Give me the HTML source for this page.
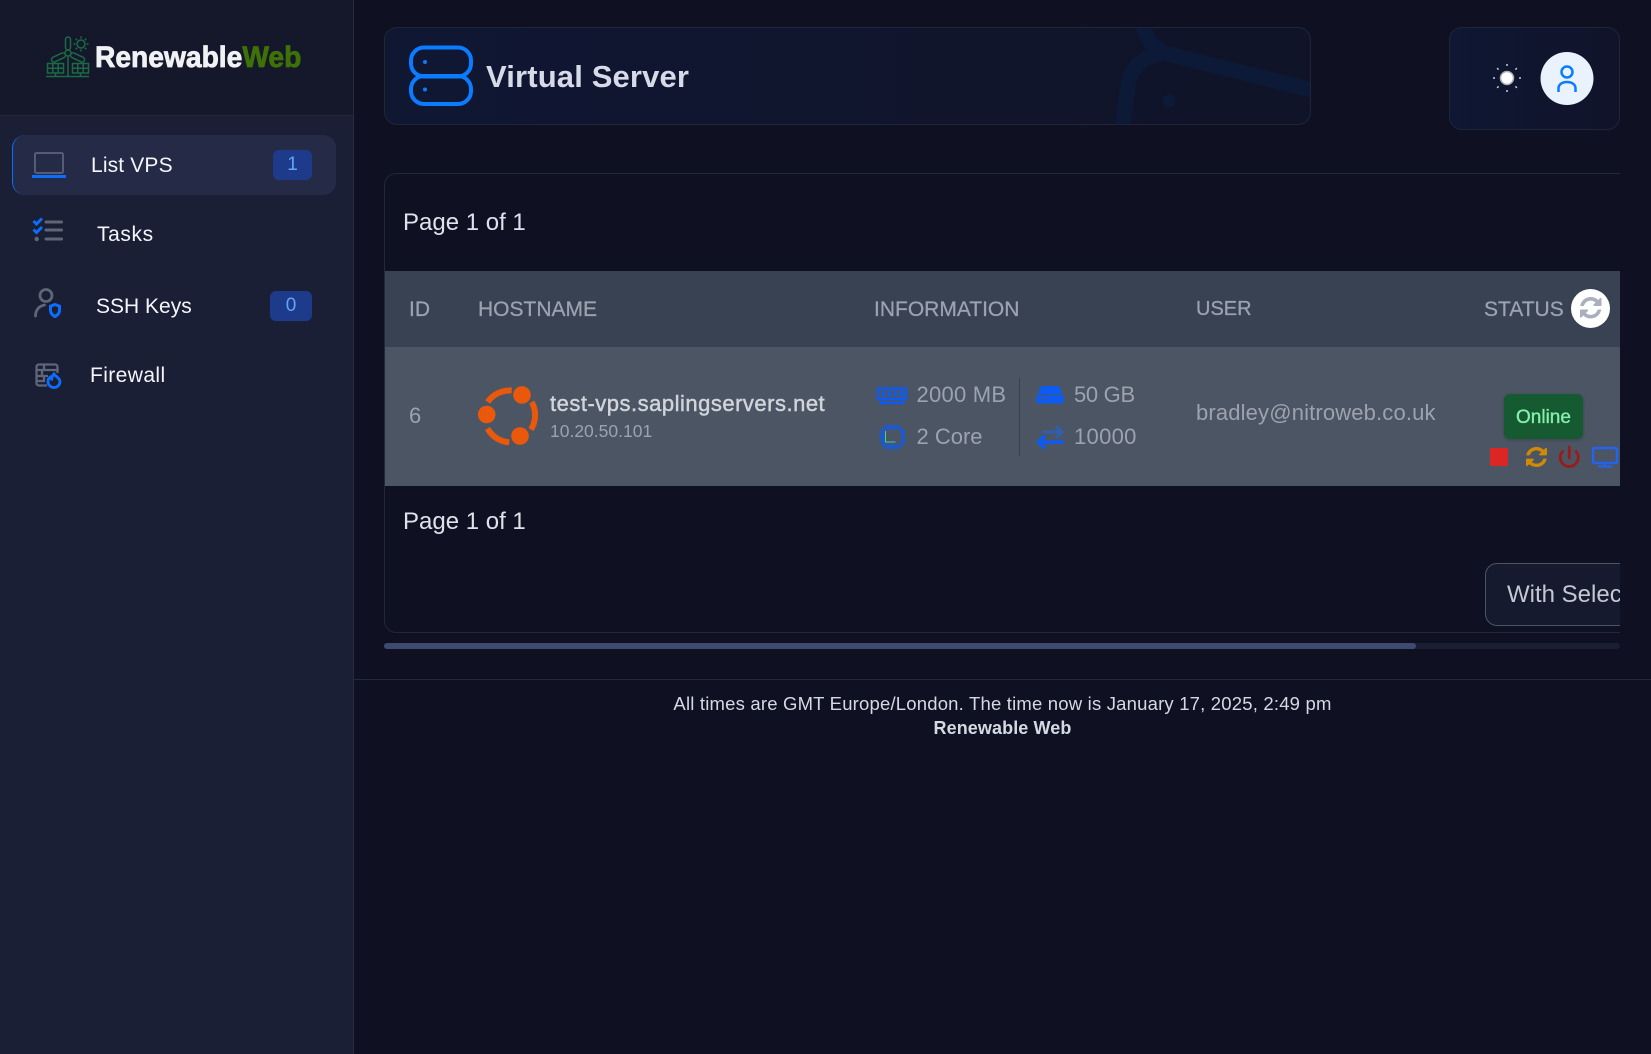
<!DOCTYPE html>
<html lang="en"><head><meta charset="utf-8"><title>Virtual Server</title>
<style>
*{box-sizing:border-box}
html,body{margin:0;padding:0;width:1651px;height:1054px;overflow:hidden;background:#0f1123;font-family:"Liberation Sans",sans-serif}
.t{position:absolute;white-space:nowrap;line-height:1}
.a{position:absolute}
svg{position:absolute;overflow:visible}
.side{left:0;top:0;width:354px;height:1054px;background:#1a1f35;border-right:1px solid #262b40}
.logo{left:0;top:0;width:353px;height:116px;background:#15172b;border-bottom:1px solid #23283c}
.active{left:12px;top:135px;width:324px;height:60px;background:#252b47;border-radius:13px;border-left:1px solid #0d6efd}
.badge{background:#1e3a8a;color:#60a5fa;border-radius:6px;font-size:19px;line-height:30px;text-align:center;height:30px}
.nav{color:#f4f6fb;font-size:21px}
.hd{left:384px;top:27px;width:927px;height:98px;border:1px solid #1e2638;border-radius:13px;background:linear-gradient(90deg,#101733,#101428);overflow:hidden}
.rt{left:1449px;top:27px;width:171px;height:103px;border:1px solid #1e2638;border-radius:13px;background:linear-gradient(90deg,#0f1733,#10132a)}
.wrap{left:384px;top:173px;width:1236px;height:460px;border:1px solid #222838;border-right:0;border-radius:12px 0 0 12px;overflow:hidden}
.th{left:0;top:97px;width:1236px;height:76px;background:#394253}
.tr{left:0;top:173px;width:1236px;height:139px;background:#4b5563}
.thx{color:#9ca3af;font-size:21px;top:124.500px;-webkit-text-stroke:.25px currentColor}
.pg{color:#dfe2ea;font-size:24px}
.g{color:#9ca3af;font-size:22px}
</style></head><body>

<div class="a side">
  <div class="a logo"></div>
  <svg style="left:0;top:0" width="354" height="116" fill="none" stroke="#1a6b44" stroke-width="1.500">
    <rect x="65.500" y="37" width="5" height="13" rx="2.500"/>
    <circle cx="68" cy="53" r="3"/>
    <rect x="-2.500" y="3" width="5" height="15" rx="2.500" transform="translate(68 53) rotate(65)"/>
    <rect x="-2.500" y="3" width="5" height="15" rx="2.500" transform="translate(68 53) rotate(-65)"/>
    <path d="M68 56V76M46 76.500H89"/>
    <path d="M47.500 63.500H63.500V73H47.500ZM52.800 63.500V73M58.200 63.500V73M47.500 68.200H63.500M55.500 73V76M72.500 63.500H88.500V73H72.500ZM77.800 63.500V73M83.200 63.500V73M72.500 68.200H88.500M80.500 73V76"/>
    <circle cx="81" cy="44" r="4"/>
    <path d="M81 36.500v2M81 49.500v2M73.500 44h2M86.500 44h2M75.700 38.700l1.400 1.400M84.900 47.900l1.400 1.400M86.300 38.700l-1.400 1.400M77.100 47.900l-1.400 1.400"/>
  </svg>
  <div class="t" style="left:95px;top:43px;font-size:30px;font-weight:700;color:#f1f2f4;transform:scaleX(.94);transform-origin:0 0;-webkit-text-stroke:.8px currentColor">Renewable<span style="color:#3f7206">Web</span></div>

  <div class="a active"></div>
  <svg style="left:0;top:0" width="354" height="420" fill="none">
    <rect x="35" y="153" width="28" height="20" rx="1.500" stroke="#545c7a" stroke-width="2"/>
    <path d="M32 176.500H66" stroke="#0d6efd" stroke-width="3"/>
    <path d="M33.500 221l3 3 5.500-5.500M33.500 229.500l3 3 5.500-5.500" stroke="#0d6efd" stroke-width="3"/>
    <circle cx="36.700" cy="239" r="2.200" fill="#5f6678"/>
    <path d="M46 222H61.500M46 230H61.500M46 239H61.500" stroke="#5f6678" stroke-width="3" stroke-linecap="round"/>
    <circle cx="46" cy="295.500" r="6" stroke="#5f6678" stroke-width="2.800"/>
    <path d="M35.500 316c0-6 3.500-10 9-11" stroke="#5f6678" stroke-width="2.800" stroke-linecap="round"/>
    <path d="M55 304.500l4.500 1.700v4.300c0 3-2 4.700-4.500 6-2.500-1.300-4.500-3-4.500-6v-4.300z" fill="#1a1f35" stroke="#0d6efd" stroke-width="3"/>
    <path d="M47 385.500H39a2.500 2.500 0 0 1-2.500-2.500V367a2.500 2.500 0 0 1 2.500-2.500H55a2.500 2.500 0 0 1 2.500 2.500V373M37 370H57M37 376H48M37 381H45M44 364.500V370M42 370V376M44 376V381" stroke="#5f6678" stroke-width="2.300"/>
    <path d="M54 374c1.500 2.500 6 4 6 7.500a6 6 0 0 1-12 0c0-2 1-3.500 2.200-4.300.3 1 .8 1.600 1.500 1.800.2-2 .8-3.500 2.300-5z" fill="#1a1f35" stroke="#0d6efd" stroke-width="2.800"/>
  </svg>
  <div class="t nav" style="left:91px;top:155px;letter-spacing:.15px">List VPS</div>
  <div class="t nav" style="left:97px;top:224px;letter-spacing:.6px">Tasks</div>
  <div class="t nav" style="left:96px;top:296px">SSH Keys</div>
  <div class="t nav" style="left:90px;top:365px;letter-spacing:.4px">Firewall</div>
  <div class="a badge" style="left:273px;top:150px;width:39px">1</div>
  <div class="a badge" style="left:270px;top:291px;width:42px">0</div>
</div>

<div class="a hd">
  <svg style="left:-1px;top:-1px" width="927" height="98">
    <g fill="none" stroke="#0d1a37" stroke-width="15" stroke-linecap="round">
      <path d="M758 -8C760 8 766 22 784 27L940 66"/>
      <path d="M772 28C754 32 746 44 744 58L737 110"/>
    </g>
    <circle cx="785" cy="74" r="6.500" fill="#0d1a37"/>
    <g fill="none" stroke="#0a7cff" stroke-width="4">
      <rect x="27" y="20.500" width="60" height="29" rx="13"/>
      <rect x="27" y="49" width="60" height="28" rx="13"/>
    </g>
    <circle cx="41" cy="35" r="2" fill="#0a7cff"/><circle cx="41" cy="62.500" r="2" fill="#0a7cff"/>
  </svg>
  <div class="t" style="left:101px;top:33px;font-size:31px;font-weight:700;color:#d6dbe8;letter-spacing:.15px">Virtual Server</div>
</div>

<div class="a rt">
  <svg style="left:-1px;top:-1px" width="171" height="103" fill="none">
    <circle cx="58" cy="51" r="6.500" fill="#fff" stroke="#a9adb8" stroke-width="1.500"/>
    <path d="M58 37v2M58 63v2M44 51h2M70 51h2M48.100 41.100l1.500 1.500M66.400 59.400l1.500 1.500M67.900 41.100l-1.500 1.500M49.600 59.400l-1.500 1.500" stroke="#c8ccd4" stroke-width="1.500"/>
    <circle cx="118" cy="51.500" r="26.500" fill="#eaf2fe"/>
    <circle cx="118" cy="45" r="5.500" stroke="#0a7cff" stroke-width="2.500"/>
    <path d="M109.500 65v-3.500c0-4 3.500-6.500 8.500-6.500s8.500 2.500 8.500 6.500V65" stroke="#0a7cff" stroke-width="2.500"/>
  </svg>
</div>

<div class="a wrap">
  <div class="t pg" style="left:18px;top:37px">Page 1 of 1</div>
  <div class="a th"></div>
  <div class="a tr"></div>
  <div class="t thx" style="left:24px">ID</div>
  <div class="t thx" style="left:93px">HOSTNAME</div>
  <div class="t thx" style="left:489px">INFORMATION</div>
  <div class="t thx" style="left:811px;font-size:20px;top:125px">USER</div>
  <div class="t thx" style="left:1099px">STATUS</div>
  <div class="a" style="left:1186px;top:115px;width:39px;height:39px;border-radius:50%;background:#fff"></div>
  <svg style="left:1195px;top:123px" width="21.500" height="21.500" viewBox="128 128 1536 1536" fill="#a9afbc"><path d="M1639 1056q0 5-1 7-64 268-268 434.500t-478 166.500q-146 0-282.500-55t-243.500-157l-129 129q-19 19-45 19t-45-19-19-45v-448q0-26 19-45t45-19h448q26 0 45 19t19 45-19 45l-137 137q71 66 161 102t187 36q134 0 250-65t186-179q11-17 53-117 8-23 30-23h192q13 0 22.500 9.500t9.500 22.500zm25-800v448q0 26-19 45t-45 19h-448q-26 0-45-19t-19-45 19-45l138-138q-148-137-349-137-134 0-250 65t-186 179q-11 17-53 117-8 23-30 23h-199q-13 0-22.500-9.500t-9.500-22.500v-7q65-268 270-434.500t480-166.500q146 0 284 55.500t245 156.500l130-129q19-19 45-19t45 19 19 45z"/></svg>

  <div class="t g" style="left:24px;top:231px">6</div>
  <div class="t" style="left:165px;top:219px;font-size:22px;letter-spacing:.5px;color:#d1d5db;-webkit-text-stroke:.45px currentColor">test-vps.saplingservers.net</div>
  <div class="t" style="left:165px;top:249px;font-size:17.500px;color:#9ca3af">10.20.50.101</div>
  <div class="t g" style="left:531.500px;top:210px;letter-spacing:.25px">2000 MB</div>
  <div class="t g" style="left:531.500px;top:252px">2 Core</div>
  <div class="t g" style="left:689px;top:210px;letter-spacing:-.3px">50 GB</div>
  <div class="t g" style="left:689px;top:252px;letter-spacing:.3px">10000</div>
  <div class="t g" style="left:811px;top:228px;letter-spacing:.15px">bradley@nitroweb.co.uk</div>
  <div class="a" style="left:634px;top:204px;width:1px;height:78px;background:#374151"></div>
  <div class="a" style="left:1119px;top:220px;width:79px;height:45px;background:#155a30;border-radius:6px;box-shadow:0 1px 3px rgba(0,0,0,.2)"></div>
  <div class="t" style="left:1131px;top:234px;font-size:19px;color:#86efac;-webkit-text-stroke:.35px currentColor">Online</div>

  <svg style="left:-1px;top:-1px" width="1236" height="460" fill="none">
    <g transform="translate(-384 -173)">
      <!-- ubuntu -->
      <g stroke="#ea580c" stroke-width="6">
        <path d="M487.700 402A27 27 0 0 1 511.700 390.500"/>
        <path d="M531.700 402A27 27 0 0 1 531 429.500"/>
        <path d="M509.300 442.300A27 27 0 0 1 487.500 428.500"/>
      </g>
      <g fill="#ea580c"><circle cx="522" cy="395" r="8.800"/><circle cx="486.700" cy="414.500" r="8.800"/><circle cx="520" cy="436" r="8.800"/></g>
      <!-- ram -->
      <path d="M878 388.500H906V399H878ZM881 399V403H903V399" stroke="#0d5bf0" stroke-width="2.400"/>
      <path d="M882 391h3.500v5.500h-3.500zM888 391h3.500v5.500h-3.500zM894 391h3.500v5.500h-3.500zM900 391h3.500v5.500h-3.500z" fill="#0d5bf0"/>
      <!-- cpu -->
      <rect x="882.500" y="428" width="20" height="18" rx="4" stroke="#0d5bf0" stroke-width="2.200"/>
      <path d="M886 424v4M890 424v4M894 424v4M898 424v4M886 446v4M890 446v4M894 446v4M898 446v4M879 432h3M879 437h3M879 442h3M903 432h3M903 437h3M903 442h3" stroke="#0d5bf0" stroke-width="1.500"/>
      <path d="M885.500 431v11h10" stroke="#2dd4bf" stroke-width="1"/>
      <!-- disk -->
      <path d="M1041 386H1059L1062.500 394H1037.500Z" fill="#0d5bf0"/>
      <rect x="1036" y="395" width="28" height="8.500" rx="3" fill="#0d5bf0"/>
      <circle cx="1041" cy="399" r="1" fill="#4b5563"/>
      <path d="M1044 399h4" stroke="#4b5563"/>
      <!-- arrows -->
      <path d="M1043 432H1062M1056 426L1062 432L1056 438" stroke="#2f5fb3" stroke-width="3"/>
      <path d="M1064 442H1038M1045 435.500L1038.500 442L1045 448.500" stroke="#0d5bf0" stroke-width="3.500"/>
      <!-- actions -->
      <rect x="1490" y="448" width="18" height="18" rx="1" fill="#dc2626"/>
      <svg x="1526" y="447" width="21" height="20" viewBox="128 128 1536 1536" fill="#d08a06" preserveAspectRatio="none"><path d="M1639 1056q0 5-1 7-64 268-268 434.500t-478 166.500q-146 0-282.500-55t-243.500-157l-129 129q-19 19-45 19t-45-19-19-45v-448q0-26 19-45t45-19h448q26 0 45 19t19 45-19 45l-137 137q71 66 161 102t187 36q134 0 250-65t186-179q11-17 53-117 8-23 30-23h192q13 0 22.500 9.500t9.500 22.500zm25-800v448q0 26-19 45t-45 19h-448q-26 0-45-19t-19-45 19-45l138-138q-148-137-349-137-134 0-250 65t-186 179q-11 17-53 117-8 23-30 23h-199q-13 0-22.500-9.500t-9.500-22.500v-7q65-268 270-434.500t480-166.500q146 0 284 55.500t245 156.500l130-129q19-19 45-19t45 19 19 45z"/></svg>
      <path d="M1562.500 451.500A9 9 0 1 0 1576 451.500M1569.300 447V458" stroke="#991b1b" stroke-width="2.800" stroke-linecap="round"/>
      <rect x="1593" y="448" width="24" height="15" rx="1.500" stroke="#2563eb" stroke-width="2.600"/>
      <path d="M1605 463v3M1598 466.500H1612" stroke="#2563eb" stroke-width="2.200"/>
    </g>
  </svg>

  <div class="t pg" style="left:18px;top:336px">Page 1 of 1</div>
  <div class="a" style="left:1100px;top:389px;width:200px;height:63px;background:#161a2e;border:1px solid #4b5563;border-radius:12px"></div>
  <div class="t" style="left:1122px;top:409px;font-size:24px;color:#c4c8d4">With Selected</div>
</div>

<div class="a" style="left:384px;top:643px;width:1236px;height:6px;background:#1a1e33;border-radius:3px"></div>
<div class="a" style="left:384px;top:643px;width:1032px;height:6px;background:#3f4a70;border-radius:3px"></div>
<div class="a" style="left:354px;top:679px;width:1297px;height:1px;background:#23283a"></div>

<div class="t" style="left:354px;width:1297px;text-align:center;top:695px;font-size:18.500px;letter-spacing:.19px;color:#d5d9e2">All times are GMT Europe/London. The time now is January 17, 2025, 2:49 pm</div>
<div class="t" style="left:354px;width:1297px;text-align:center;top:719px;font-size:18px;letter-spacing:.1px;font-weight:700;color:#d5d9e2">Renewable Web</div>
</body></html>
